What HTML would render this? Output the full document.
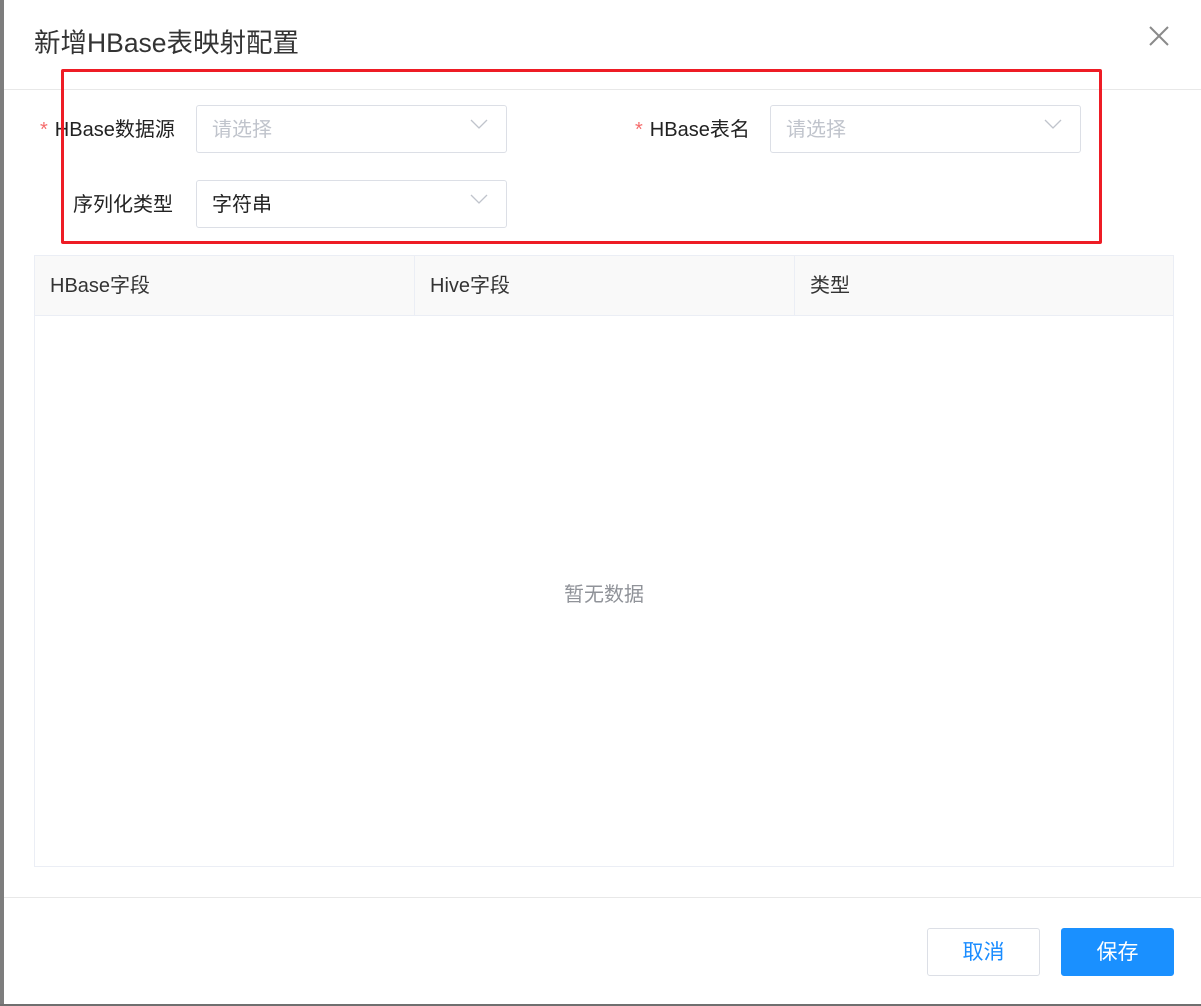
<!DOCTYPE html>
<html><head><meta charset="utf-8"><style>
*{margin:0;padding:0;box-sizing:border-box}
body{width:1201px;height:1006px;background:#fff;position:relative;overflow:hidden;font-family:"Liberation Sans","Noto Sans CJK SC",sans-serif;color:#222}
.a{position:absolute}
.sel{position:absolute;border:1px solid #dcdfe6;border-radius:3px;background:#fff;height:48px;width:311px;font-size:20px;line-height:48px;padding-left:15px}
.sel svg{position:absolute;right:18px;top:13px}
.lbl{position:absolute;font-size:20px;line-height:26px;color:#222}
.star{color:#f56c6c;margin-right:7px}
.th{position:absolute;top:0;height:61px;line-height:60px;font-size:20px;color:#333;padding-left:15px}
.btn{position:absolute;top:928px;width:113px;height:48px;border-radius:3px;font-size:21px;line-height:48px;text-align:center}
</style></head><body>
<div class="a" style="left:0;top:0;width:4px;height:1006px;background:#7d7d7d"></div>
<div class="a" style="left:0;top:1004px;width:1201px;height:2px;background:#6f6f6f"></div>
<div class="a" style="left:34px;top:26px;font-size:26.5px;line-height:34px;color:#333">新增HBase表映射配置</div>
<svg class="a" style="left:1148px;top:25px" width="22" height="22" viewBox="0 0 22 22"><path d="M2 2L20 20M20 2L2 20" stroke="#8a8a8a" stroke-width="2"/></svg>
<div class="a" style="left:4px;top:89px;width:1197px;height:1px;background:#e8e8e8"></div>

<div class="lbl" style="left:40px;top:117px"><span class="star">*</span>HBase数据源</div>
<div class="sel" style="left:196px;top:105px;color:#c0c4cc">请选择<svg width="18" height="10" viewBox="0 0 18 10"><path d="M1 1L9 9L17 1" fill="none" stroke="#c0c4cc" stroke-width="1.3"/></svg></div>
<div class="lbl" style="left:635px;top:117px"><span class="star">*</span>HBase表名</div>
<div class="sel" style="left:770px;top:105px;color:#c0c4cc">请选择<svg width="18" height="10" viewBox="0 0 18 10"><path d="M1 1L9 9L17 1" fill="none" stroke="#c0c4cc" stroke-width="1.3"/></svg></div>
<div class="lbl" style="left:73px;top:192px">序列化类型</div>
<div class="sel" style="left:196px;top:180px;color:#222">字符串<svg width="18" height="10" viewBox="0 0 18 10"><path d="M1 1L9 9L17 1" fill="none" stroke="#c0c4cc" stroke-width="1.3"/></svg></div>

<div class="a" style="left:61px;top:69px;width:1041px;height:175px;border:3px solid #ee1c25;border-radius:2px"></div>

<div class="a" style="left:34px;top:255px;width:1140px;height:612px;border:1px solid #ebeef5">
 <div class="a" style="left:0;top:0;width:1138px;height:60px;background:#f9f9f9;border-bottom:1px solid #ebeef5"></div>
 <div class="th" style="left:0">HBase字段</div>
 <div class="a" style="left:379px;top:0;width:1px;height:60px;background:#ebeef5"></div>
 <div class="th" style="left:380px">Hive字段</div>
 <div class="a" style="left:759px;top:0;width:1px;height:60px;background:#ebeef5"></div>
 <div class="th" style="left:760px">类型</div>
 <div class="a" style="left:0;top:322px;width:1138px;text-align:center;font-size:20px;color:#909399">暂无数据</div>
</div>

<div class="a" style="left:4px;top:897px;width:1197px;height:1px;background:#e8e8e8"></div>
<div class="btn" style="left:927px;border:1px solid #dcdfe6;color:#1a8cff;background:#fff">取消</div>
<div class="btn" style="left:1061px;background:#1a90ff;color:#fff;border:1px solid #1a90ff">保存</div>
</body></html>
